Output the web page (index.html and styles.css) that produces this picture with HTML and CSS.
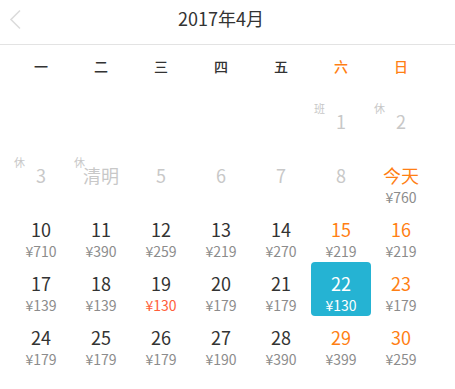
FILE: index.html
```html
<!DOCTYPE html>
<html lang="zh-CN">
<head>
<meta charset="utf-8">
<title>2017年4月</title>
<link rel="stylesheet" href="styles.css">
</head>
<body>
<div class="header">
  <div class="header-inner">
    <span class="back">
      <svg width="14" height="22" viewBox="0 0 14 22"><polyline points="11,1.5 2,10.5 11,19.5" fill="none" stroke="#dcdcdc" stroke-width="1.6"/></svg>
    </span>
    <div class="title">2017年4月</div>
  </div>
</div>
<div class="cal">
  <div class="week">
    <span>一</span><span>二</span><span>三</span><span>四</span><span>五</span><span class="we">六</span><span class="we">日</span>
  </div>
  <div class="days">
    <div class="cell"></div><div class="cell"></div><div class="cell"></div><div class="cell"></div><div class="cell"></div>
    <div class="cell off"><i class="tag">班</i><b>1</b></div>
    <div class="cell off"><i class="tag">休</i><b>2</b></div>

    <div class="cell off"><i class="tag">休</i><b>3</b></div>
    <div class="cell off"><i class="tag">休</i><b>清明</b></div>
    <div class="cell off"><b>5</b></div>
    <div class="cell off"><b>6</b></div>
    <div class="cell off"><b>7</b></div>
    <div class="cell off"><b>8</b></div>
    <div class="cell we"><b>今天</b><em>¥760</em></div>

    <div class="cell"><b>10</b><em>¥710</em></div>
    <div class="cell"><b>11</b><em>¥390</em></div>
    <div class="cell"><b>12</b><em>¥259</em></div>
    <div class="cell"><b>13</b><em>¥219</em></div>
    <div class="cell"><b>14</b><em>¥270</em></div>
    <div class="cell we"><b>15</b><em>¥219</em></div>
    <div class="cell we"><b>16</b><em>¥219</em></div>

    <div class="cell"><b>17</b><em>¥139</em></div>
    <div class="cell"><b>18</b><em>¥139</em></div>
    <div class="cell"><b>19</b><em class="low">¥130</em></div>
    <div class="cell"><b>20</b><em>¥179</em></div>
    <div class="cell"><b>21</b><em>¥179</em></div>
    <div class="cell sel"><b>22</b><em>¥130</em></div>
    <div class="cell we"><b>23</b><em>¥179</em></div>

    <div class="cell"><b>24</b><em>¥179</em></div>
    <div class="cell"><b>25</b><em>¥179</em></div>
    <div class="cell"><b>26</b><em>¥179</em></div>
    <div class="cell"><b>27</b><em>¥190</em></div>
    <div class="cell"><b>28</b><em>¥390</em></div>
    <div class="cell we"><b>29</b><em>¥399</em></div>
    <div class="cell we"><b>30</b><em>¥259</em></div>
  </div>
</div>
</body>
</html>
```
FILE: styles.css
```css
html, body {
  margin: 0;
  padding: 0;
  background: #fff;
}
body {
  font-family: "Noto Sans CJK SC", "Noto Sans", sans-serif;
  color: #333;
}
.header {
  height: 44px;
  border-bottom: 1px solid #e3e3e3;
}
.header-inner {
  position: relative;
  width: 420px;
  margin-left: 11px;
  height: 44px;
}
.back {
  position: absolute;
  left: -2px;
  top: 9px;
  width: 14px;
  height: 22px;
}
.back svg {
  display: block;
}
.title {
  text-align: center;
  font-size: 18px;
  line-height: 36px;
  color: #333;
}
.cal {
  width: 420px;
  margin-left: 11px;
}
.week {
  display: grid;
  grid-template-columns: repeat(7, 60px);
  height: 42px;
  margin-bottom: 13px;
}
.week span {
  text-align: center;
  font-size: 14px;
  font-weight: 500;
  line-height: 42px;
  color: #333;
}
.week span.we {
  color: #ff7f14;
}
.days {
  display: grid;
  grid-template-columns: repeat(7, 60px);
  grid-auto-rows: 54px;
}
.cell {
  position: relative;
  display: flex;
  flex-direction: column;
  align-items: center;
  padding-top: 10px;
  box-sizing: border-box;
  border-radius: 4px;
}
.cell b {
  font-weight: normal;
  font-size: 18px;
  line-height: 22px;
  color: #333;
}
.cell em {
  font-style: normal;
  font-size: 14px;
  line-height: 18px;
  margin-top: 2px;
  color: #8c8c8c;
}
.cell em.low {
  color: #ff5e3a;
}
.cell.off b {
  color: #c8c8c8;
}
.cell.we b {
  color: #ff7f14;
}
.cell.sel {
  background: #25b3d3;
}
.cell.sel b,
.cell.sel em {
  color: #fff;
}
.tag {
  position: absolute;
  left: 3px;
  top: 2px;
  font-style: normal;
  font-size: 11px;
  line-height: 12px;
  color: #c8c8c8;
}
```
